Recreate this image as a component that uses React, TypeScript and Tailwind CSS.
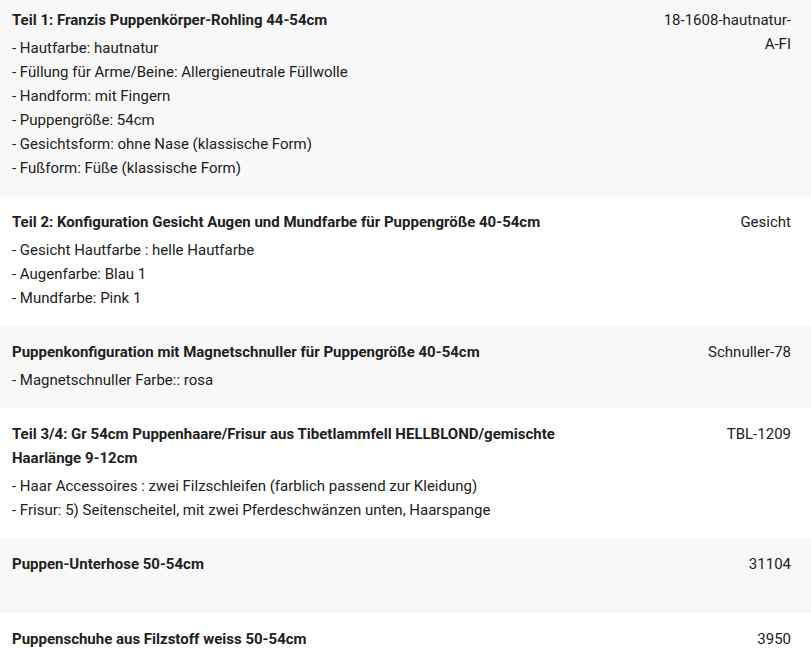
const items = [
  {
    title: "Teil 1: Franzis Puppenkörper-Rohling 44-54cm",
    sku: "18-1608-hautnatur-A-FI",
    details: [
      "- Hautfarbe: hautnatur",
      "- Füllung für Arme/Beine: Allergieneutrale Füllwolle",
      "- Handform: mit Fingern",
      "- Puppengröße: 54cm",
      "- Gesichtsform: ohne Nase (klassische Form)",
      "- Fußform: Füße (klassische Form)",
    ],
  },
  {
    title: "Teil 2: Konfiguration Gesicht Augen und Mundfarbe für Puppengröße 40-54cm",
    sku: "Gesicht",
    details: ["- Gesicht Hautfarbe : helle Hautfarbe", "- Augenfarbe: Blau 1", "- Mundfarbe: Pink 1"],
  },
  {
    title: "Puppenkonfiguration mit Magnetschnuller für Puppengröße 40-54cm",
    sku: "Schnuller-78",
    details: ["- Magnetschnuller Farbe:: rosa"],
  },
  {
    title: "Teil 3/4: Gr 54cm Puppenhaare/Frisur aus Tibetlammfell HELLBLOND/gemischte Haarlänge 9-12cm",
    sku: "TBL-1209",
    details: [
      "- Haar Accessoires : zwei Filzschleifen (farblich passend zur Kleidung)",
      "- Frisur: 5) Seitenscheitel, mit zwei Pferdeschwänzen unten, Haarspange",
    ],
  },
  { title: "Puppen-Unterhose 50-54cm", sku: "31104", details: [] },
  { title: "Puppenschuhe aus Filzstoff weiss 50-54cm", sku: "3950", details: [] },
];

export default function App() {
  return (
    <div
      className="w-[811px] h-[663px] overflow-hidden bg-white text-[15px] leading-6 text-[#212121]"
      style={{ fontFamily: "Roboto, 'Liberation Sans', sans-serif" }}
    >
      <div className="-mt-1.5">
        {items.map((it, i) => (
          <div
            key={i}
            className={`flex gap-[36px] pl-3 pr-5 pt-3.5 pb-4 ${i % 2 === 0 ? "bg-[#f8f8f8]" : "bg-white"}`}
          >
            <div className="min-w-0 flex-1">
              <p className="font-bold">{it.title}</p>
              {it.details.length > 0 ? (
                <div className="mt-1">
                  {it.details.map((d, j) => (
                    <p key={j}>{d}</p>
                  ))}
                </div>
              ) : (
                <div className="h-[21px]" />
              )}
            </div>
            <div className="w-[135px] shrink-0 text-right">{it.sku}</div>
          </div>
        ))}
      </div>
    </div>
  );
}
